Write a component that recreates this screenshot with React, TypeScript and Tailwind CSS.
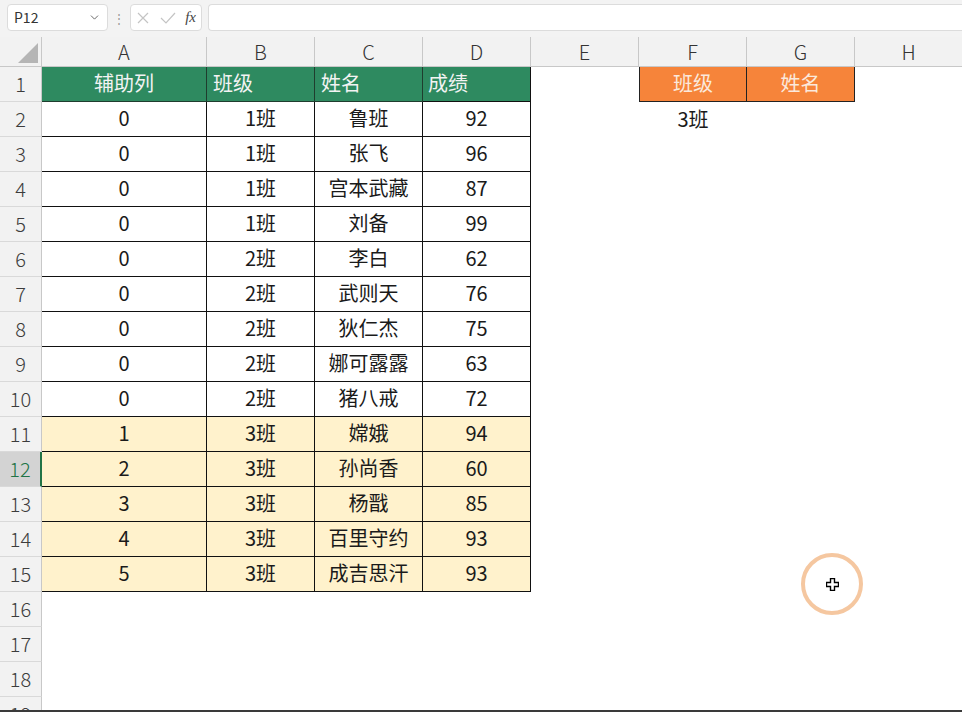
import { ChevronDown } from 'lucide-react';

const COLS = ['A', 'B', 'C', 'D', 'E', 'F', 'G', 'H'];

type Row = [string, string, string, string];

const DATA: Row[] = [
  ['0', '1班', '鲁班', '92'],
  ['0', '1班', '张飞', '96'],
  ['0', '1班', '宫本武藏', '87'],
  ['0', '1班', '刘备', '99'],
  ['0', '2班', '李白', '62'],
  ['0', '2班', '武则天', '76'],
  ['0', '2班', '狄仁杰', '75'],
  ['0', '2班', '娜可露露', '63'],
  ['0', '2班', '猪八戒', '72'],
  ['1', '3班', '嫦娥', '94'],
  ['2', '3班', '孙尚香', '60'],
  ['3', '3班', '杨戬', '85'],
  ['4', '3班', '百里守约', '93'],
  ['5', '3班', '成吉思汗', '93'],
];

const font = { fontFamily: '"Noto Sans CJK SC", "Noto Sans", sans-serif' };

function RowHead({ n }: { n: number }) {
  const selected = n === 12;
  return (
    <div
      className={
        'flex h-[35px] items-center justify-center border-b border-[#d9d9d9] pb-[1px] text-[20px] font-light ' +
        (selected
          ? 'border-r-2 border-r-[#217346] bg-[#d3d3d3] text-[#217346]'
          : 'border-r border-r-[#c8c8c8] bg-[#f2f2f2] text-[#3c3c3c]')
      }
    >
      {n}
    </div>
  );
}

function Cell({
  children,
  cls = '',
}: {
  children?: React.ReactNode;
  cls?: string;
}) {
  return <div className={'flex h-[35px] items-center pb-[2px] text-[20px] ' + cls}>{children}</div>;
}

export default function App() {
  return (
    <div className="relative h-[712px] w-[962px] overflow-hidden bg-white text-[#1a1a1a]" style={font}>
      {/* formula bar */}
      <div className="flex h-[37px] items-start gap-0 bg-[#f3f3f3] pt-[4px]">
        <div className="ml-[7px] flex h-[27px] w-[101px] items-center justify-between rounded-[4px] border border-[#dcdcdc] bg-white pl-[6px] pr-[6px] text-[14px] text-[#333]">
          <span>P12</span>
          <ChevronDown size={13} strokeWidth={1.6} className="text-[#555]" />
        </div>
        <div className="flex h-[27px] w-[22px] items-center justify-center text-[12px] text-[#999]">⋮</div>
        <div className="flex h-[27px] w-[72px] items-center justify-between rounded-[4px] border border-[#dcdcdc] bg-white px-[5px]">
          <svg width="14" height="14" viewBox="0 0 14 14">
            <path d="M2 2 L12 12 M12 2 L2 12" stroke="#c4c4c4" strokeWidth="1.2" />
          </svg>
          <svg width="16" height="14" viewBox="0 0 16 14">
            <path d="M1 7 L6 12 L15 2" stroke="#c4c4c4" strokeWidth="1.2" fill="none" />
          </svg>
          <span className="text-[15px] italic text-[#444]" style={{ fontFamily: '"Liberation Serif", serif' }}>
            fx
          </span>
        </div>
        <div className="ml-[6px] h-[27px] flex-1 rounded-l-[4px] border border-r-0 border-[#dcdcdc] bg-white" />
      </div>

      {/* grid */}
      <div className="grid grid-cols-[42px_165px_108px_108px_108px_108px_108px_108px_108px]">
        {/* column header row */}
        <div className="relative h-[30px] border-b border-r border-[#c8c8c8] bg-[#f2f2f2]">
          <svg className="absolute right-[3px] bottom-[3px]" width="20" height="20" viewBox="0 0 20 20">
            <path d="M20 0 L20 20 L0 20 Z" fill="#b5b5b5" />
          </svg>
        </div>
        {COLS.map((c) => (
          <div
            key={c}
            className="flex h-[30px] items-center justify-center border-b border-r border-[#c8c8c8] bg-[#f2f2f2] text-[20px] font-light text-[#333]"
          >
            {c}
          </div>
        ))}

        {/* row 1 */}
        <RowHead n={1} />
        <Cell cls="justify-center border-r border-b border-[#1f3d2e] bg-[#2e8a60] text-[#f3f3f3]">辅助列</Cell>
        <Cell cls="pl-[6px] border-r border-b border-[#1f3d2e] bg-[#2e8a60] text-[#f3f3f3]">班级</Cell>
        <Cell cls="pl-[6px] border-r border-b border-[#1f3d2e] bg-[#2e8a60] text-[#f3f3f3]">姓名</Cell>
        <Cell cls="pl-[5px] border-r border-b border-[#111] bg-[#2e8a60] text-[#f3f3f3]">成绩</Cell>
        <Cell />
        <Cell cls="justify-center border-l border-r border-b border-[#222] bg-[#f6843a] text-[#fbe9dc]">班级</Cell>
        <Cell cls="justify-center border-r border-b border-[#222] bg-[#f6843a] text-[#fbe9dc]">姓名</Cell>
        <Cell />

        {DATA.map((r, i) => {
          const n = i + 2;
          const bg = n >= 11 ? 'bg-[#fff2cc]' : 'bg-white';
          const c = `justify-center border-r border-b border-[#111] ${bg}`;
          return [
            <RowHead key={`h${n}`} n={n} />,
            <Cell key={`a${n}`} cls={c}>{r[0]}</Cell>,
            <Cell key={`b${n}`} cls={c}>{r[1]}</Cell>,
            <Cell key={`c${n}`} cls={c}>{r[2]}</Cell>,
            <Cell key={`d${n}`} cls={c}>{r[3]}</Cell>,
            <Cell key={`e${n}`} />,
            <Cell key={`f${n}`} cls="justify-center">{n === 2 ? '3班' : ''}</Cell>,
            <Cell key={`g${n}`} />,
            <Cell key={`x${n}`} />,
          ];
        })}

        {[16, 17, 18, 19].map((n) => [
          <RowHead key={`h${n}`} n={n} />,
          <div key={`r${n}`} className="col-span-8 h-[35px]" />,
        ])}
      </div>

      {/* bottom frame line */}
      <div className="absolute bottom-0 left-0 h-[2px] w-full bg-[#3a3a3a]" />

      {/* click highlight cursor */}
      <div className="absolute left-[801px] top-[553px] h-[62px] w-[62px] rounded-full border-[4px] border-[#f5c7a0]" />
      <svg className="absolute left-[826px] top-[578px]" width="13" height="13" viewBox="0 0 13 13">
        <path
          d="M4.5 0.5 H8.5 V4.5 H12.5 V8.5 H8.5 V12.5 H4.5 V8.5 H0.5 V4.5 H4.5 Z"
          fill="white"
          stroke="black"
          strokeWidth="1.4"
        />
      </svg>
    </div>
  );
}
